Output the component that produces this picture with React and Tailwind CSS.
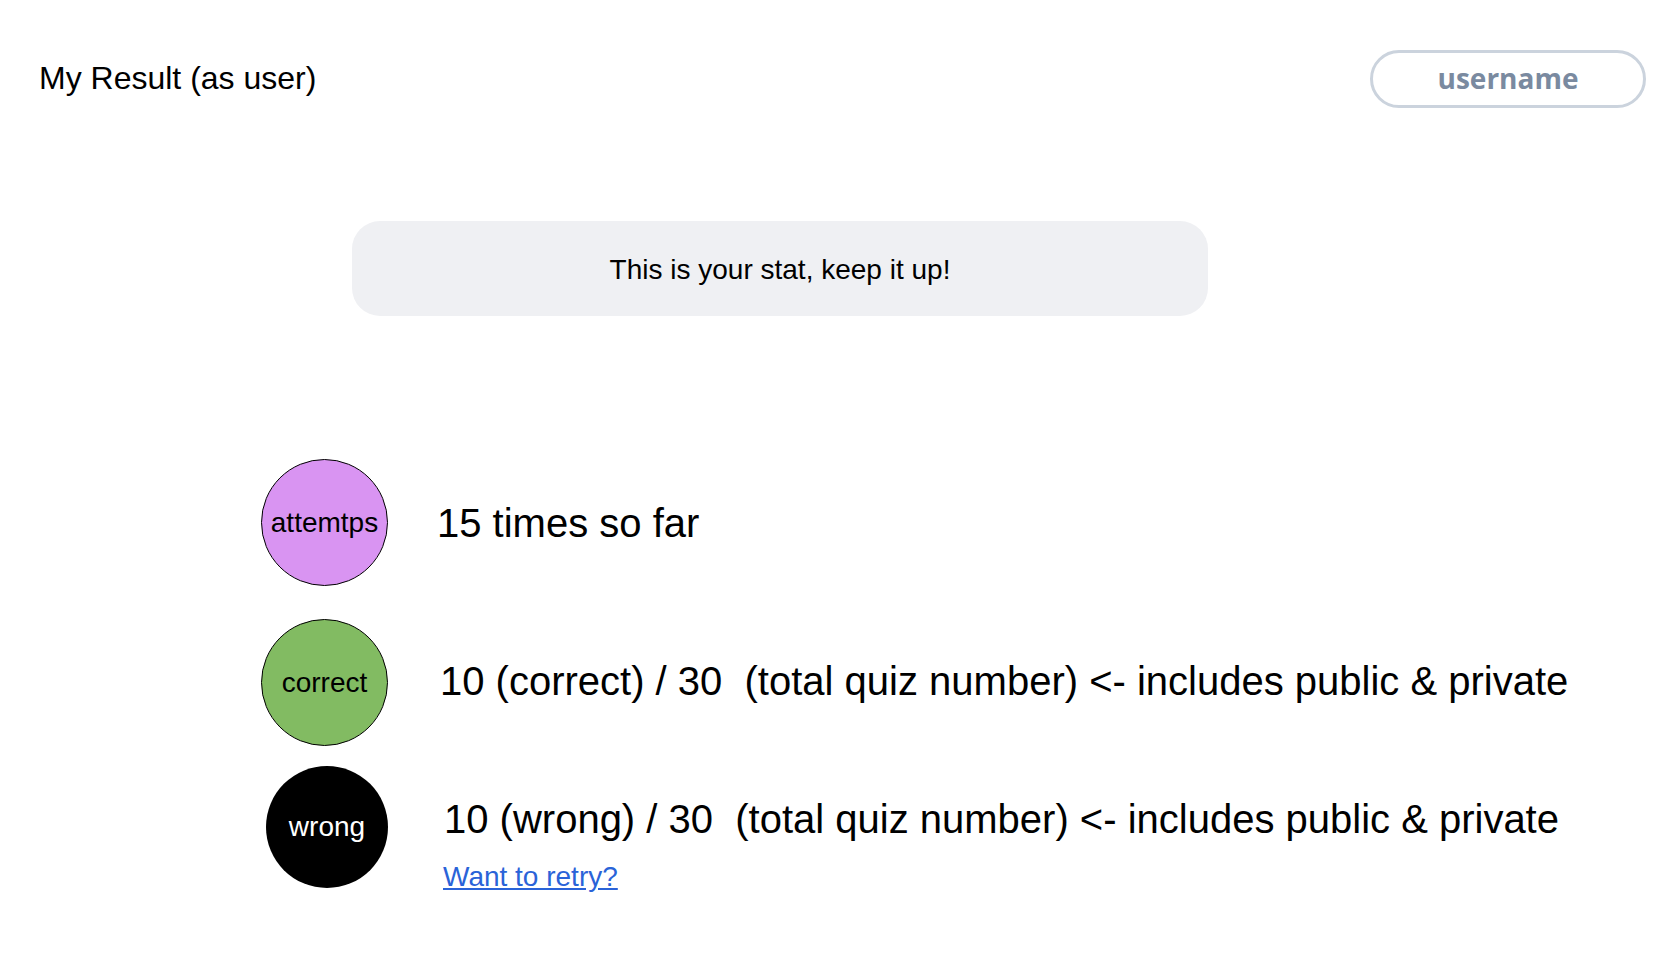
export default function App() {
    const helv = { fontFamily: '"Liberation Sans", Arial, sans-serif' };

    return (
        <div className="min-h-screen bg-white text-black" style={helv}>
            {/* Header */}
            <div className="flex items-center justify-between pt-[50px] pl-[39px] pr-[16px]">
                <h1 className="-mt-[2px] text-[32px] font-normal leading-[1.15]">My Result (as user)</h1>
                <button className="w-[276px] h-[58px] pb-[2px] rounded-full border-[3px] border-[#cbd3dd] bg-white text-[#7a8aa0] text-[28px] font-bold font-['Open_Sans',sans-serif] leading-none">
                    username
                </button>
            </div>

            {/* Banner */}
            <div className="ml-[352px] mt-[113px] w-[856px] h-[95px] rounded-[28px] bg-[#eff0f3] flex items-center justify-center">
                <p className="mt-[4px] text-[28px] leading-[1.15]">This is your stat, keep it up!</p>
            </div>

            {/* Stats */}
            <div className="ml-[261px] mt-[143px] flex flex-col">
                <div className="flex items-center">
                    <div className="w-[127px] h-[127px] rounded-full border-[1.5px] border-black bg-[#d994f2] flex items-center justify-center shrink-0">
                        <span className="text-[28px] leading-none">attemtps</span>
                    </div>
                    <p className="ml-[49px] mt-[1px] text-[40px] leading-[1.15]">15 times so far</p>
                </div>

                <div className="flex items-center mt-[33px]">
                    <div className="w-[127px] h-[127px] rounded-full border-[1.5px] border-black bg-[#82bb62] flex items-center justify-center shrink-0">
                        <span className="text-[28px] leading-none">correct</span>
                    </div>
                    <p className="ml-[52px] -mt-[4px] text-[40px] leading-[1.15] whitespace-pre">
                        {'10 (correct) / 30  (total quiz number) <- includes public & private'}
                    </p>
                </div>

                <div className="flex items-start mt-[20px]">
                    <div className="ml-[5px] w-[122px] h-[122px] rounded-full bg-black flex items-center justify-center shrink-0">
                        <span className="text-[28px] leading-none text-white">wrong</span>
                    </div>
                    <div className="ml-[56px] mt-[30px] flex flex-col items-start">
                        <p className="text-[40px] leading-[1.15] whitespace-pre">
                            {'10 (wrong) / 30  (total quiz number) <- includes public & private'}
                        </p>
                        <a href="#" className="mt-[19px] -ml-[1px] text-[28px] leading-[1.15] text-[#2a63d8] underline">
                            Want to retry?
                        </a>
                    </div>
                </div>
            </div>
        </div>
    );
}
